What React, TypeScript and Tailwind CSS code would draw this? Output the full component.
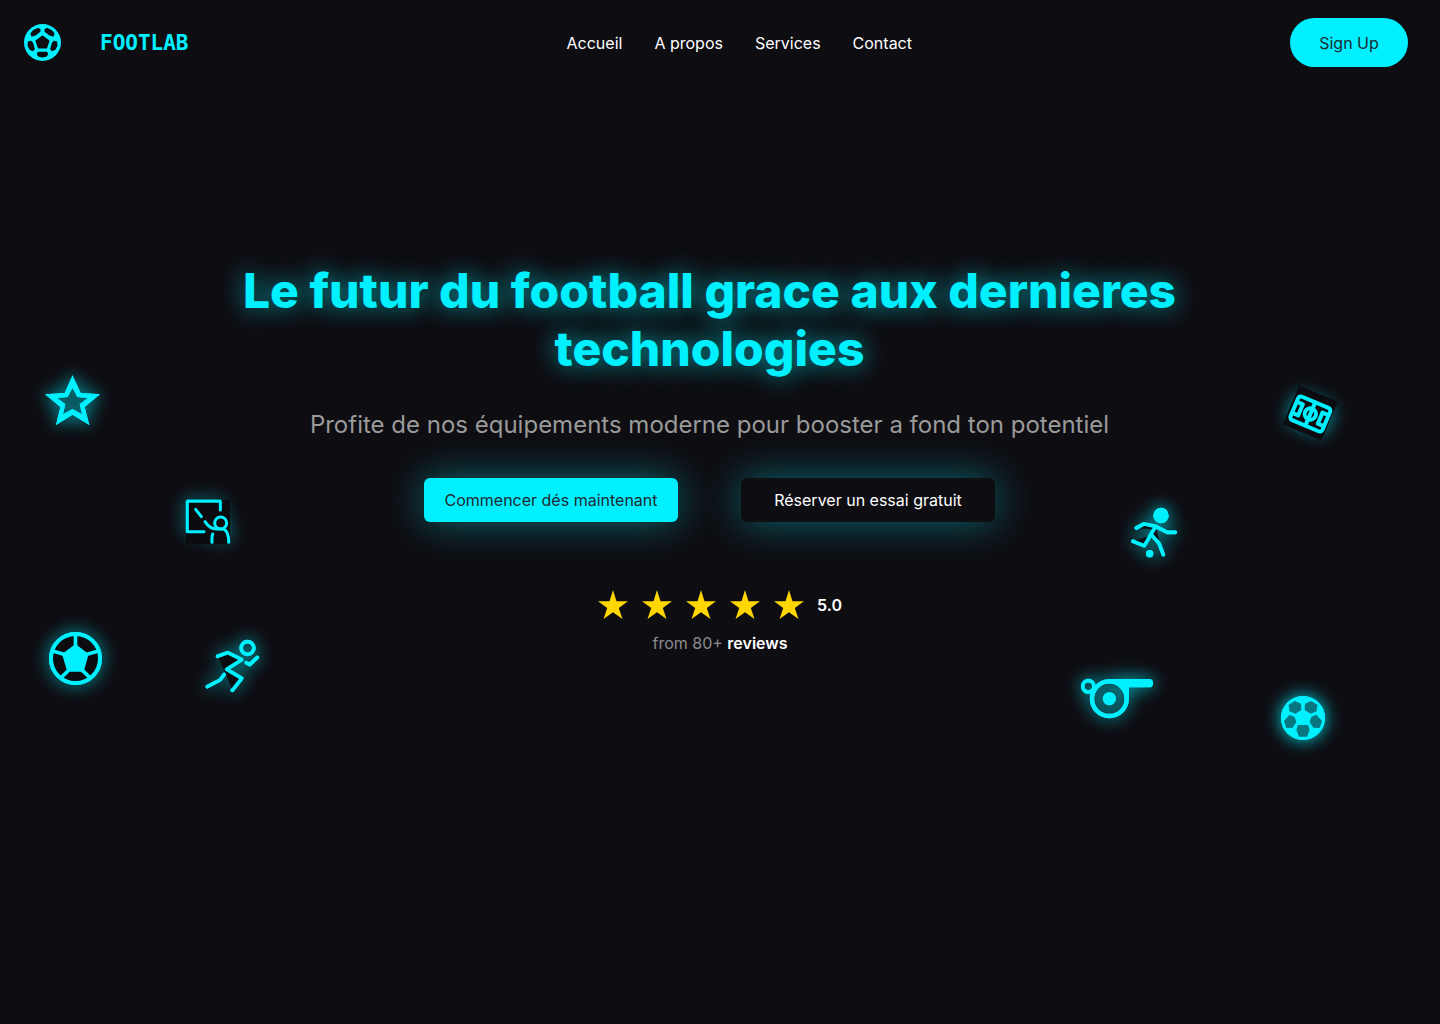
import type { ReactNode } from "react";

const GLOW = "[filter:drop-shadow(0_0_24px_#00f0ffbb)_drop-shadow(0_0_30px_#00f0ff33)]";

type ArtProps = {
  place: string;
  box: string;
  dark?: ReactNode;
  children: ReactNode;
};

// A floating neon drawing: glow layer, dark backing, then the crisp strokes.
function Art({ place, box, dark, children }: ArtProps) {
  return (
    <svg
      aria-hidden="true"
      viewBox={box}
      fill="none"
      stroke="#00f0ff"
      strokeLinecap="round"
      strokeLinejoin="round"
      className={`pointer-events-none absolute overflow-visible ${place}`}
    >
      <g className={GLOW}>{children}</g>
      <g stroke="none" fill="#0c0c10">{dark}</g>
      <g>{children}</g>
    </svg>
  );
}

function Logo() {
  return (
    <svg aria-hidden="true" viewBox="72 72 111 111" className="size-[37px]">
      <circle cx="127.5" cy="127.5" r="55.5" fill="#00f0ff" />
      <g fill="#0e0d12" stroke="#0e0d12" strokeWidth="5" strokeLinejoin="round">
        <path d="M127.5 109 146 123 139 143H116L109 123Z" />
        <path d="M94 101 101 92 114 86 119 89V94L104 105 96 107Z" />
        <path d="M161 101 154 92 141 86 136 89V94L151 105 159 107Z" />
        <path d="M86 126 93 125 97 130 102 147 98 151 91 148 85 137Z" />
        <path d="M169 126 162 125 158 130 153 147 157 151 164 148 170 137Z" />
        <path d="M115 158H140L142 163 138 168 127 170 117 168 113 163Z" />
      </g>
    </svg>
  );
}

function Decorations() {
  return (
    <>
      <Art place="left-[20px] top-[350px] h-[100px] w-[110px]" box="0 0 330 300">
        <path
          fill="#00f0ff"
          stroke="none"
          fillRule="evenodd"
          d="M157.500 76 134 129 75 133 121 171 108 225 157.500 194 208 225 194 171 240 133 182 129ZM157.500 177 129 193 136 163 112 144 143 141 157.500 114 172 141 203 144 179 163 186 193Z"
        />
      </Art>
      <Art
        place="left-[160px] top-[470px] size-[100px]"
        box="0 0 300 300"
        dark={<rect x="78" y="90" width="132" height="132" />}
      >
        <g strokeWidth="9">
          <path d="M181 120V94H82V185H132M107 118 124 140" />
          <circle cx="182" cy="159" r="18" />
          <path d="M135 155Q150 178 172 177H190Q206 182 206 217M158 192Q155 200 156 217" />
        </g>
      </Art>
      <Art
        place="left-[25px] top-[610px] size-[100px]"
        box="0 0 300 300"
        dark={<circle cx="151.500" cy="145.500" r="75" />}
      >
        <circle cx="151.500" cy="145.500" r="73.500" strokeWidth="12" />
        <path fill="#00f0ff" stroke="none" d="M151.500 102 191 132 176 185H127L111 132Z" />
        <path
          strokeWidth="11"
          d="M151.500 73V108M218 124 186 133M194 202 170 179M109 202 133 179M85 124 117 133"
        />
      </Art>
      <Art
        place="left-[185px] top-[620px] h-[90px] w-[100px]"
        box="0 0 300 270"
        dark={<path d="M98 108 128 97 170 118 125 148 170 175 143 211Z" />}
      >
        <g strokeWidth="11">
          <circle cx="187.500" cy="84" r="19" />
          <path d="M98 109 128 98 170 119 125 148 170 175 142 211M118 163 105 180 67 200M184 128 194 134 217 112" />
        </g>
      </Art>
      <Art
        place="right-[80px] top-[365px] size-[100px]"
        box="0 0 300 300"
        dark={<rect x="-63" y="-63" width="126" height="126" transform="translate(151 144) rotate(23)" />}
      >
        <g transform="translate(151 147) rotate(23)" strokeWidth="12">
          <rect x="-52" y="-38" width="104" height="76" rx="9" />
          <path d="M0-37V37M-51-18H-32V18H-51M51-18H32V18H51" />
          <circle r="17" />
        </g>
      </Art>
      <Art
        place="right-[235px] top-[485px] h-[95px] w-[100px]"
        box="0 0 300 285"
        dark={
          <path d="M94 130 117 117 150 124 146 133ZM84 169 135 152 118 182ZM152 126 163 166 140 150Z" />
        }
      >
        <g fill="#00f0ff" stroke="none">
          <circle cx="168" cy="91.500" r="23" />
          <circle cx="134" cy="206" r="11" />
        </g>
        <path
          strokeWidth="11"
          d="M94 129 117 117 152 124 187 142H211M152 124 118 182 84 169M142 152 162 175 175 209"
        />
      </Art>
      <Art place="right-[260px] top-[655px] h-[85px] w-[120px]" box="0 0 360 255">
        <circle cx="148" cy="131" r="52" strokeWidth="13" />
        <circle cx="148" cy="131" r="19.500" fill="#00f0ff" stroke="none" />
        <circle cx="85" cy="94" r="17" strokeWidth="11" />
        <path
          fill="#00f0ff"
          stroke="none"
          d="M148 72H267Q279 72 279 84.500T267 97H207V131H195Q190 88 148 84Z"
        />
      </Art>
      <Art place="right-[85px] top-[670px] h-[95px] w-[100px]" box="0 0 300 285">
        <circle cx="144" cy="144" r="66" fill="#00f0ff" stroke="none" />
        <g fill="#087680" stroke="none">
          <path d="M120 93 138 101 139 120 121 131 103 124 101 104Z" />
          <path d="M168 93 150 101 149 120 167 131 185 124 187 104Z" />
          <path d="M104 134 119 141 124 156 113 173 94 174 87 153Z" />
          <path d="M184 134 169 141 164 156 175 173 194 174 201 153Z" />
          <path d="M129 165H159L164 180 156 200H132L124 180Z" />
        </g>
      </Art>
    </>
  );
}

const links = ["Accueil", "A propos", "Services", "Contact"];

export default function App() {
  return (
    <div className="relative min-h-screen overflow-hidden bg-[#0e0d12] font-['Inter',sans-serif] text-white">
      <header className="flex items-center justify-between pt-[18px] pr-8 pl-6">
        <a href="#accueil" className="flex items-center gap-[39px] text-[#00f0ff]">
          <Logo />
          <span className="font-['DejaVu_Sans_Mono',monospace] text-[21px] leading-6 font-bold">
            FOOTLAB
          </span>
        </a>
        <nav className="flex gap-8 text-base">
          {links.map((label) => (
            <a key={label} href={`#${label}`}>
              {label}
            </a>
          ))}
        </nav>
        <button
          type="button"
          className="h-[49px] w-[118px] rounded-full bg-[#00f0ff] text-base text-[#1f2a30]"
        >
          Sign Up
        </button>
      </header>

      <main>
        <section className="mt-[195px] flex flex-col items-center pr-[21px] text-center">
          <h1 className="max-w-[980px] text-5xl leading-[58px] font-extrabold text-[#00f0ff] [text-shadow:0_0_25px_#00f0ffaa]">
            Le futur du football grace aux dernieres technologies
          </h1>
          <p className="mt-8 text-2xl leading-[30px] text-[#9a9a9a]">
            Profite de nos équipements moderne pour booster a fond ton potentiel
          </p>
          <div className="mt-[38px] flex gap-[63px]">
            <button
              type="button"
              className="h-11 w-[254px] rounded-md bg-[#00f0ff] text-base text-[#1f2a30] shadow-[0_0_40px_#00f0ff66]"
            >
              Commencer dés maintenant
            </button>
            <button
              type="button"
              className="h-11 w-[254px] rounded-md bg-[#0e0d12] text-base shadow-[0_0_40px_#00f0ff66]"
            >
              Réserver un essai gratuit
            </button>
          </div>
        </section>

        <section className="mt-[68px] flex flex-col items-center">
          <div className="flex items-center gap-[13px]">
            <div role="img" aria-label="5 étoiles sur 5" className="flex gap-[14px]">
              {[1, 2, 3, 4, 5].map((n) => (
                <svg key={n} viewBox="0 0 30 30" className="size-[30px]" fill="#ffd600">
                  <path d="M15 0 18.500 11.300H30L20.800 18 24.500 29 15 22.200 5.500 29 9.200 18 0 11.300H11.500Z" />
                </svg>
              ))}
            </div>
            <span className="text-base font-semibold">5.0</span>
          </div>
          <p className="mt-[11px] text-base text-[#8c8c8e]">
            from 80+ <strong className="font-semibold text-white">reviews</strong>
          </p>
        </section>
      </main>

      <Decorations />
    </div>
  );
}
